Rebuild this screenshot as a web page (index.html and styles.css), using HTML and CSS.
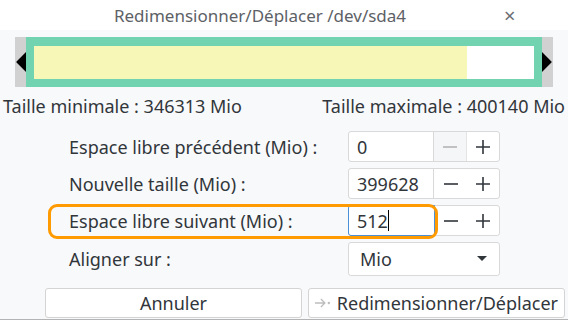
FILE: index.html
```html
<!DOCTYPE html>
<html lang="fr">
<head>
    <meta charset="UTF-8">
    <title>Redimensionner/Déplacer /dev/sda4</title>
    <link rel="stylesheet" href="styles.css">
</head>
<body>
    <div class="window">
        <div class="titlebar">
            <span class="title">Redimensionner/Déplacer /dev/sda4</span>
            <span class="close">×</span>
        </div>

        <div class="partition-bar">
            <span class="arrow arrow-left"></span>
            <div class="partition">
                <div class="used"></div>
            </div>
            <span class="arrow arrow-right"></span>
        </div>

        <div class="limits">
            <span>Taille minimale : 346313 Mio</span>
            <span>Taille maximale : 400140 Mio</span>
        </div>

        <div class="form">
            <label>Espace libre précédent (Mio) :</label>
            <div class="spin">
                <div class="value">0</div>
                <div class="step minus disabled">
                    <svg width="16" height="16" viewBox="0 0 16 16"><path d="M1 8h14" stroke="currentColor" stroke-width="1.6"/></svg>
                </div>
                <div class="step plus sep">
                    <svg width="16" height="16" viewBox="0 0 16 16"><path d="M1 8h14M8 1v14" stroke="currentColor" stroke-width="1.6"/></svg>
                </div>
            </div>

            <label>Nouvelle taille (Mio) :</label>
            <div class="spin">
                <div class="value">399628</div>
                <div class="step minus">
                    <svg width="16" height="16" viewBox="0 0 16 16"><path d="M1 8h14" stroke="currentColor" stroke-width="1.6"/></svg>
                </div>
                <div class="step plus">
                    <svg width="16" height="16" viewBox="0 0 16 16"><path d="M1 8h14M8 1v14" stroke="currentColor" stroke-width="1.6"/></svg>
                </div>
            </div>

            <label class="highlighted">Espace libre suivant (Mio) :</label>
            <div class="spin">
                <div class="value focused">512<span class="caret"></span></div>
                <div class="step minus">
                    <svg width="16" height="16" viewBox="0 0 16 16"><path d="M1 8h14" stroke="currentColor" stroke-width="1.6"/></svg>
                </div>
                <div class="step plus">
                    <svg width="16" height="16" viewBox="0 0 16 16"><path d="M1 8h14M8 1v14" stroke="currentColor" stroke-width="1.6"/></svg>
                </div>
            </div>

            <label>Aligner sur :</label>
            <div class="combo">
                <span>Mio</span>
                <svg width="10" height="6" viewBox="0 0 10 6"><path d="M0 0h10L5 5z" fill="#31363b"/></svg>
            </div>
        </div>

        <div class="buttons">
            <button>Annuler</button>
            <button>
                <svg width="16" height="10" viewBox="0 0 16 10"><path d="M0 5h10M6 1l4 4-4 4" stroke="#bdbdbd" stroke-width="1.3" fill="none"/><circle cx="14" cy="5" r="1.2" fill="#bdbdbd"/></svg>
                Redimensionner/Déplacer
            </button>
        </div>
    </div>
</body>
</html>
```

FILE: styles.css
```css
body {
    margin: 0;
    background: #ffffff;
    font-family: "Noto Sans", "DejaVu Sans", sans-serif;
    color: #31363b;
}
.window {
    width: 568px;
    height: 320px;
    background: #f8f9fa;
    border-bottom: 1px solid #b4b4b4;
    box-sizing: border-box;
}
.titlebar {
    height: 30px;
    display: flex;
    align-items: center;
    background: #ffffff;
}
.title {
    flex: 1;
    padding-left: 24px;
    text-align: center;
    font-size: 17px;
    color: #5d6166;
}
.close {
    width: 64px;
    padding-left: 8px;
    font-size: 20px;
    color: #6b6e72;
}
.partition-bar {
    display: flex;
    align-items: center;
    height: 50px;
    margin: 7px 15px 0 15px;
    background: #d1d1d1;
}
.arrow {
    width: 11px;
    height: 20px;
    display: flex;
}
.arrow-left {
    clip-path: polygon(100% 0, 100% 100%, 10% 50%);
    background: #000;
}
.arrow-right {
    clip-path: polygon(0 0, 0 100%, 90% 50%);
    background: #000;
}
.partition {
    flex: 1;
    height: 100%;
    box-sizing: border-box;
    border: 8px solid #72d3b0;
    border-top-width: 9px;
    background: #ffffff;
}
.used {
    width: 433px;
    height: 100%;
    background: #f7f7b7;
}
.limits {
    display: flex;
    justify-content: space-between;
    padding: 0 3px;
    margin-top: 9px;
    font-size: 18px;
    line-height: 20px;
}
.form {
    display: grid;
    grid-template-columns: 279px 152px;
    grid-template-rows: 31px 31px 31px 34px;
    row-gap: 6px;
    margin: 15px 0 0 69px;
    font-size: 18px;
}
.form label {
    display: flex;
    align-items: center;
}
.highlighted {
    position: relative;
}
.highlighted::before {
    content: "";
    position: absolute;
    left: -21px;
    top: -1px;
    width: 390px;
    height: 35px;
    box-sizing: border-box;
    border: 3px solid #ff9a00;
    border-radius: 9px;
    z-index: 2;
}
.spin {
    display: flex;
    border: 1px solid #d9d9d9;
    border-radius: 3px;
    background: #ffffff;
}
.value {
    width: 86px;
    display: flex;
    align-items: center;
    padding-left: 8px;
    box-sizing: border-box;
    border-right: 1px solid #d9d9d9;
}
.value.focused {
    border: 1px solid #4a90d9;
    margin: -1px 0 -1px -1px;
    width: 88px;
    border-radius: 3px 0 0 3px;
    background: #fff;
}
.caret {
    display: inline-block;
    width: 1px;
    height: 21px;
    background: #000;
}
.step {
    width: 33px;
    display: flex;
    align-items: center;
    justify-content: center;
    color: #31363b;
}
.step.plus {
    width: 32px;
}
.step.disabled {
    color: #b4b5b6;
    background: #f5f6f7;
}
.step.sep {
    border-left: 1px solid #e4e4e4;
}
.combo {
    display: flex;
    align-items: center;
    justify-content: space-between;
    padding: 0 12px 0 11px;
    border: 1px solid #d9d9d9;
    border-radius: 3px;
    background: #ffffff;
}
.buttons {
    display: flex;
    gap: 6px;
    margin: 12px 0 0 45px;
}
button {
    width: 257px;
    height: 30px;
    display: flex;
    align-items: center;
    justify-content: center;
    gap: 6px;
    border: 1px solid #d4d4d4;
    border-radius: 3px;
    background: #ffffff;
    font-family: "Noto Sans", "DejaVu Sans", sans-serif;
    font-size: 18px;
    color: #31363b;
}
```
